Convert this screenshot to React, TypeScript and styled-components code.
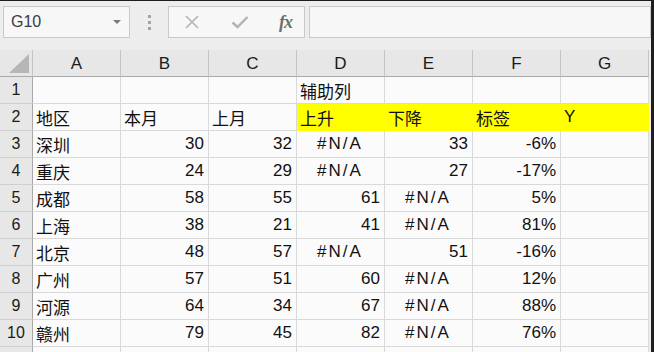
import React, { FunctionComponent } from 'react';
import styled, { createGlobalStyle } from 'styled-components';

const GlobalStyle = createGlobalStyle`
  html, body {
    margin: 0;
    padding: 0;
    background: #ededed;
  }
  body {
    font-family: "Liberation Sans", "Noto Sans CJK SC", sans-serif;
  }
`;

const Window_ = styled.div`
  background: #ededed;
  border-right: 3px solid #1e1e1e;
  border-top: 1px solid #1e1e1e;
  box-sizing: border-box;
  height: 352px;
  overflow: hidden;
  width: 654px;
`;

const FormulaBar_ = styled.div`
  align-items: flex-start;
  display: flex;
  height: 49px;
  padding: 5px 0 0 3px;
  box-sizing: border-box;
`;

const Box_ = styled.div<{ $width?: number }>`
  align-items: center;
  background: #f7f7f7;
  border: 1px solid #c9c9c9;
  box-sizing: border-box;
  display: flex;
  flex: ${props => (props.$width ? `0 0 ${props.$width}px` : '1 1 auto')};
  height: 32px;
`;

const NameText_ = styled.span`
  color: #3a3a48;
  flex: 1;
  font-size: 16px;
  padding-left: 7px;
`;

const DropArrow_ = styled.span`
  border-left: 4px solid transparent;
  border-right: 4px solid transparent;
  border-top: 4px solid #7a7a7a;
  height: 0;
  margin-right: 8px;
  width: 0;
`;

const Grip_ = styled.div`
  display: flex;
  flex: 0 0 38px;
  flex-direction: column;
  align-items: center;
  gap: 3px;
  padding-top: 9px;
`;

const GripDot_ = styled.span`
  background: #a4a4a4;
  height: 3px;
  width: 3px;
`;

const Spacer_ = styled.div`
  flex: 0 0 4px;
`;

const FxButtons_ = styled.div`
  align-items: center;
  display: flex;
  height: 100%;
  justify-content: space-between;
  padding: 0 12px 0 15px;
  width: 100%;
`;

const Fx_ = styled.span`
  color: #6e6e6e;
  font-family: "Liberation Serif", serif;
  font-size: 18px;
  font-style: italic;
  font-weight: bold;
  letter-spacing: -1px;
`;

const Sheet_ = styled.div`
  display: grid;
  grid-auto-rows: 27px;
  grid-template-columns: 33px repeat(7, 88px);
`;

const Corner_ = styled.div`
  align-items: flex-end;
  background: #e7e7e7;
  border-bottom: 1px solid #a9a9a9;
  border-right: 1px solid #c4c4c4;
  box-sizing: border-box;
  display: flex;
  justify-content: flex-end;
  padding: 0 3px 3px 0;
`;

const ColHead_ = styled.div`
  align-items: center;
  background: #e7e7e7;
  border-bottom: 1px solid #a9a9a9;
  border-right: 1px solid #c4c4c4;
  box-sizing: border-box;
  color: #1a1a1a;
  display: flex;
  font-size: 17px;
  justify-content: center;
  padding-top: 2px;
`;

const RowHead_ = styled.div`
  align-items: center;
  background: #e7e7e7;
  border-bottom: 1px solid #cfcfcf;
  border-right: 1px solid #a9a9a9;
  box-sizing: border-box;
  color: #1a1a1a;
  display: flex;
  font-size: 16px;
  justify-content: center;
`;

type Align = 'left' | 'right' | 'center';

const Cell_ = styled.div<{ $align: Align; $fill?: string }>`
  align-items: center;
  background: ${props => props.$fill || '#fbfbfb'};
  border-bottom: 1px solid ${props => props.$fill || '#d9d9d9'};
  border-right: 1px solid ${props => props.$fill || '#d9d9d9'};
  box-sizing: border-box;
  color: #111;
  display: flex;
  font-size: 17px;
  justify-content: ${props =>
    props.$align === 'left' ? 'flex-start' : props.$align === 'right' ? 'flex-end' : 'center'};
  letter-spacing: ${props => (props.$align === 'center' ? '2px' : 'normal')};
  padding: 0 4px 0 3px;
  white-space: nowrap;
`;

const COLUMNS = ['A', 'B', 'C', 'D', 'E', 'F', 'G'];

const ROWS: string[][] = [
  ['', '', '', '辅助列', '', '', ''],
  ['地区', '本月', '上月', '上升', '下降', '标签', 'Y'],
  ['深圳', '30', '32', '#N/A', '33', '-6%', ''],
  ['重庆', '24', '29', '#N/A', '27', '-17%', ''],
  ['成都', '58', '55', '61', '#N/A', '5%', ''],
  ['上海', '38', '21', '41', '#N/A', '81%', ''],
  ['北京', '48', '57', '#N/A', '51', '-16%', ''],
  ['广州', '57', '51', '60', '#N/A', '12%', ''],
  ['河源', '64', '34', '67', '#N/A', '88%', ''],
  ['赣州', '79', '45', '82', '#N/A', '76%', ''],
];

// row 11 is only a sliver at the bottom edge, its label is out of view
const PARTIAL_ROW = ['', '', '', '', '', '', ''];

const alignOf = (value: string): Align => {
  if (value === '#N/A') return 'center';
  if (/^-?\d+%?$/.test(value)) return 'right';
  return 'left';
};

const CrossIcon: FunctionComponent = () => (
  <svg width="16" height="16" viewBox="0 0 16 16">
    <path d="M2 2 L14 14 M14 2 L2 14" stroke="#b3b3b3" strokeWidth="1.6" fill="none" />
  </svg>
);

const CheckIcon: FunctionComponent = () => (
  <svg width="18" height="16" viewBox="0 0 18 16">
    <path d="M1.5 8.5 L6.5 13 L16.5 3" stroke="#b3b3b3" strokeWidth="2.4" fill="none" />
  </svg>
);

const CornerTriangle: FunctionComponent = () => (
  <svg width="20" height="19" viewBox="0 0 20 19">
    <polygon points="20,0 20,19 0,19" fill="#b6b6b6" />
  </svg>
);

const App: FunctionComponent = () => (
  <>
    <GlobalStyle />
    <Window_>
      <FormulaBar_>
        <Box_ $width={127}>
          <NameText_>G10</NameText_>
          <DropArrow_ />
        </Box_>
        <Grip_>
          <GripDot_ />
          <GripDot_ />
          <GripDot_ />
        </Grip_>
        <Box_ $width={137}>
          <FxButtons_>
            <CrossIcon />
            <CheckIcon />
            <Fx_>fx</Fx_>
          </FxButtons_>
        </Box_>
        <Spacer_ />
        <Box_ />
      </FormulaBar_>
      <Sheet_>
        <Corner_>
          <CornerTriangle />
        </Corner_>
        {COLUMNS.map(col => (
          <ColHead_ key={`col-${col}`}>{col}</ColHead_>
        ))}
        {ROWS.map((row, rowIndex) => (
          <React.Fragment key={`row-${rowIndex}`}>
            <RowHead_>{rowIndex + 1}</RowHead_>
            {row.map((value, colIndex) => {
              const id = `cell-${rowIndex}-${colIndex}`;
              const fill = rowIndex === 1 && colIndex >= 3 ? '#ffff00' : undefined;
              return (
                <Cell_ key={id} $align={alignOf(value)} $fill={fill}>
                  {value}
                </Cell_>
              );
            })}
          </React.Fragment>
        ))}
        <RowHead_ />
        {PARTIAL_ROW.map((value, colIndex) => (
          <Cell_ key={`cell-last-${colIndex}`} $align="left">
            {value}
          </Cell_>
        ))}
      </Sheet_>
    </Window_>
  </>
);

export default App;
